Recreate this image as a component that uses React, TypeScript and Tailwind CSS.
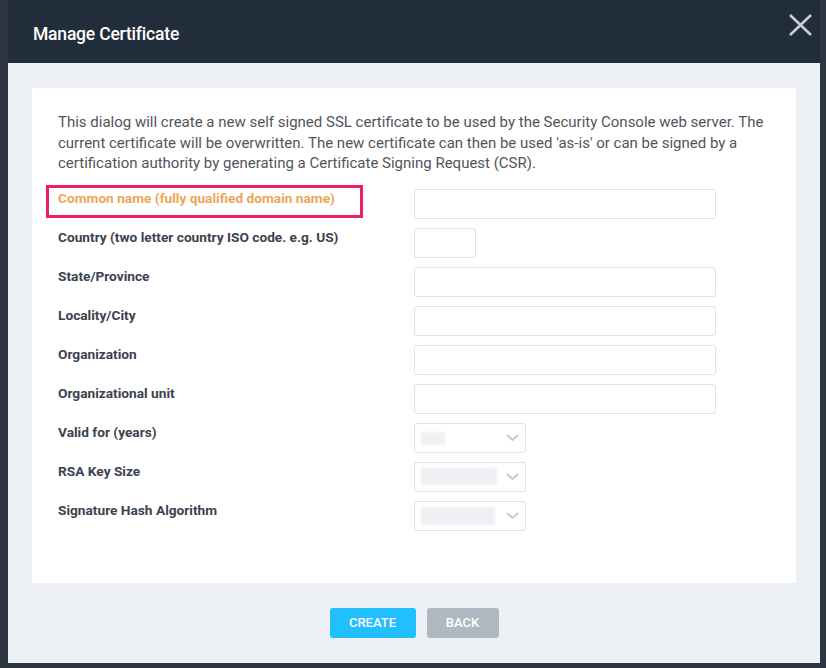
import React from "react";

const rows = [
  { label: "Common name (fully qualified domain name)", kind: "text", highlight: true },
  { label: "Country (two letter country ISO code. e.g. US)", kind: "short" },
  { label: "State/Province", kind: "text" },
  { label: "Locality/City", kind: "text" },
  { label: "Organization", kind: "text" },
  { label: "Organizational unit", kind: "text" },
  { label: "Valid for (years)", kind: "select", blur: "w-[24px] h-[13px] mt-[1px]" },
  { label: "RSA Key Size", kind: "select", blur: "w-[76px] h-[17px]" },
  { label: "Signature Hash Algorithm", kind: "select", blur: "w-[74px] h-[18px]" },
];

const Chevron = () => (
  <svg width="13" height="8" viewBox="0 0 13 8" fill="none">
    <path d="M1.5 1.5 L6.5 6 L11.5 1.5" stroke="#c4c7cc" strokeWidth="1.8" strokeLinecap="round" />
  </svg>
);

const Field = ({ kind, blur }: { kind: string; blur?: string }) => {
  if (kind === "short") {
    return <div className="w-[62px] h-[30px] bg-white border border-[#e1e1e1] rounded-[3px]" />;
  }
  if (kind === "select") {
    return (
      <div className="w-[112px] h-[30px] bg-white border border-[#e1e1e1] rounded-[3px] flex items-center justify-between pl-[6px] pr-[6px]">
        <div className={`${blur} bg-[#eef0f3] blur-[1px] rounded-[1px]`} />
        <Chevron />
      </div>
    );
  }
  return <div className="w-[302px] h-[30px] bg-white border border-[#e1e1e1] rounded-[3px]" />;
};

const App = () => {
  return (
    <div className="w-[826px] h-[668px] bg-[#2c3540] overflow-hidden" style={{ fontFamily: "Roboto, 'Liberation Sans', sans-serif" }}>
      <div className="ml-[8px] w-[812px] h-[663px] flex flex-col">
        <div className="h-[63px] bg-[#212d3b] flex items-center justify-between pl-[25px] pr-[7px]">
          <h1 className="text-white text-[17.5px] font-medium pt-[6px] tracking-[-0.2px]">Manage Certificate</h1>
          <svg width="25" height="22" viewBox="0 0 25 22" className="mb-[14px]">
            <path d="M2 1 L23 21 M23 1 L2 21" stroke="#c9ced5" strokeWidth="2.6" />
          </svg>
        </div>
        <div className="flex-1 bg-[#edf0f5] px-[24px] pt-[25px] pb-[25px] flex flex-col">
          <div className="bg-white pl-[26px] pr-[20px] pt-[24px] pb-[52px]">
            <p className="text-[15px] leading-[20.5px] text-[#51555b] whitespace-nowrap">
              This dialog will create a new self signed SSL certificate to be used by the Security Console web server. The
              <br />
              current certificate will be overwritten. The new certificate can then be used 'as-is' or can be signed by a
              <br />
              certification authority by generating a Certificate Signing Request (CSR).
            </p>
            <div className="mt-[15px] flex flex-col gap-[9px]">
              {rows.map((r) => (
                <div key={r.label} className="flex">
                  <div className="w-[356px] relative">
                    <div className={`mt-[1px] text-[13.7px] leading-[16px] font-bold ${r.highlight ? "text-[#eea659]" : "text-[#3c4250]"}`}>
                      {r.label}
                    </div>
                    {r.highlight && (
                      <div className="absolute left-[-12px] top-[-4px] w-[317px] h-[33px] border-[3px] border-[#ee1f5c]" />
                    )}
                  </div>
                  <Field kind={r.kind} blur={r.blur} />
                </div>
              ))}
            </div>
          </div>
          <div className="mt-[25px] flex justify-center gap-[11px]">
            <button className="h-[30px] w-[86px] bg-[#22bffe] text-white text-[13px] font-medium rounded-[3px]">CREATE</button>
            <button className="h-[30px] w-[72px] bg-[#afb8c0] text-white text-[13px] font-medium rounded-[3px]">BACK</button>
          </div>
        </div>
      </div>
    </div>
  );
};

export default App;
